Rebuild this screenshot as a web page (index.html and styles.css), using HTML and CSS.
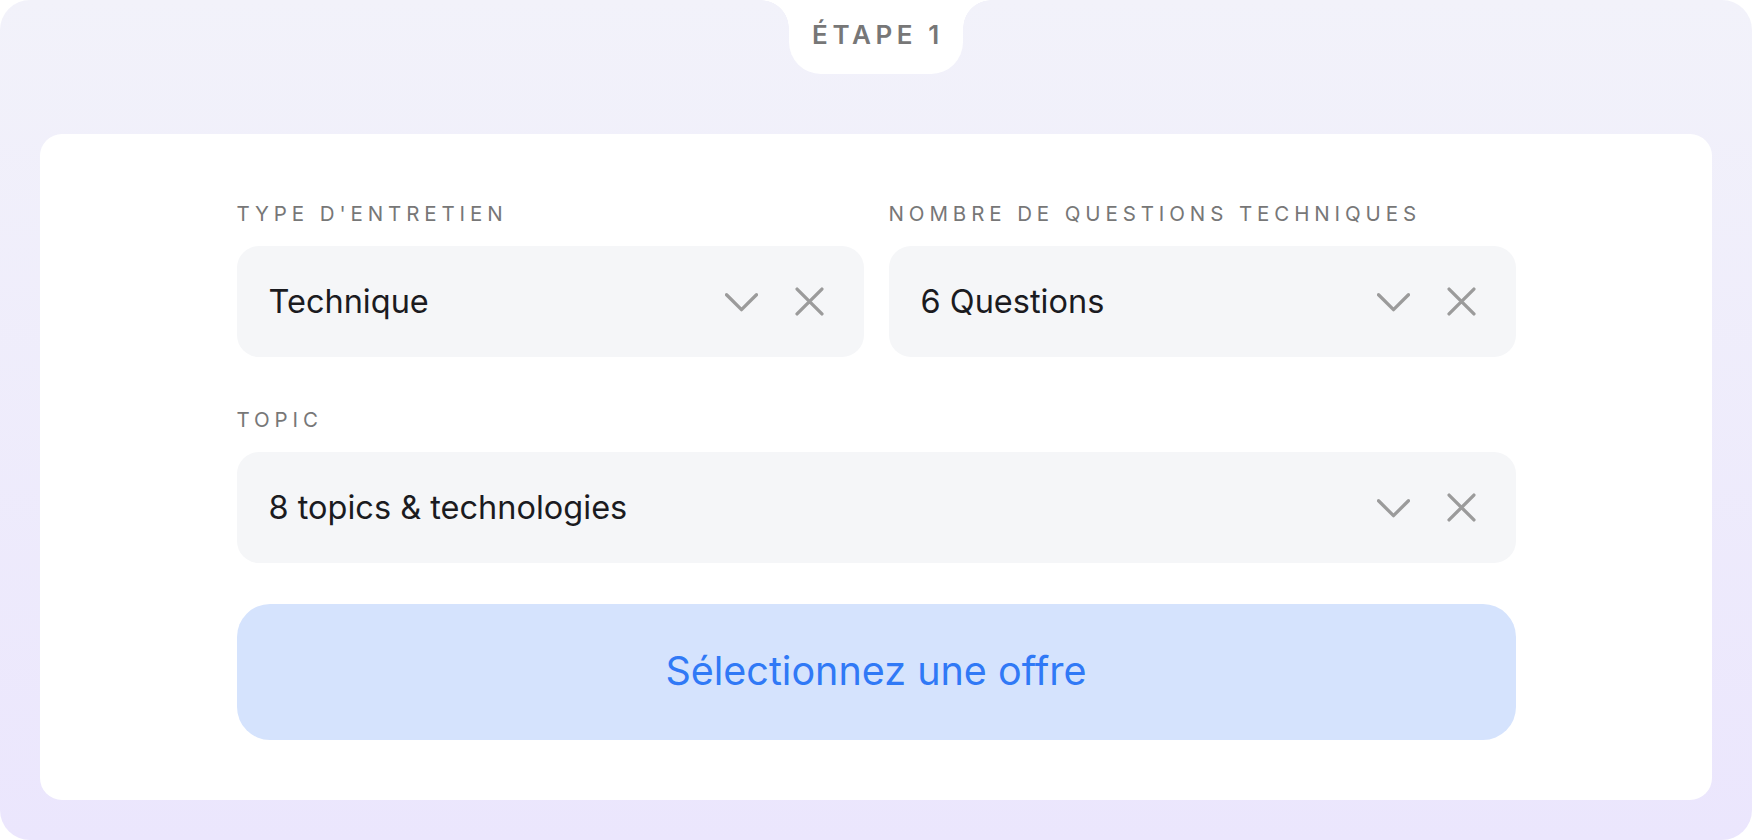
FILE: index.html
```html
<!DOCTYPE html>
<html lang="fr">

<head>
  <meta charset="UTF-8">
  <meta name="viewport" content="width=device-width, initial-scale=1.0">
  <title>Étape 1</title>
  <link rel="stylesheet" href="styles.css">
</head>

<body>

  <section class="step">
    <div class="step-tab">Étape 1</div>

    <div class="card">
      <form class="form">
        <div class="row">
          <div class="group">
            <label class="label">Type d'entretien</label>
            <div class="select">
              <span class="select-value">Technique</span>
              <svg class="icon-chevron" viewBox="0 0 32 19"><path d="M1.5 1.5 L16 16 L30.5 1.5" /></svg>
              <svg class="icon-clear" viewBox="0 0 28 28"><path d="M2 2 L26 26 M26 2 L2 26" /></svg>
            </div>
          </div>

          <div class="group">
            <label class="label">Nombre de questions techniques</label>
            <div class="select">
              <span class="select-value">6 Questions</span>
              <svg class="icon-chevron" viewBox="0 0 32 19"><path d="M1.5 1.5 L16 16 L30.5 1.5" /></svg>
              <svg class="icon-clear" viewBox="0 0 28 28"><path d="M2 2 L26 26 M26 2 L2 26" /></svg>
            </div>
          </div>
        </div>

        <div class="group">
          <label class="label">Topic</label>
          <div class="select">
            <span class="select-value">8 topics &amp; technologies</span>
            <svg class="icon-chevron" viewBox="0 0 32 19"><path d="M1.5 1.5 L16 16 L30.5 1.5" /></svg>
            <svg class="icon-clear" viewBox="0 0 28 28"><path d="M2 2 L26 26 M26 2 L2 26" /></svg>
          </div>
        </div>

        <button type="button" class="offer-btn">Sélectionnez une offre</button>
      </form>
    </div>
  </section>

</body>

</html>
```

FILE: styles.css
```css
* {
  box-sizing: border-box;
  font-family: 'Inter', 'Noto Sans', sans-serif;
}

body {
  background-color: #fff;
  margin: 0;
}

.step {
  display: flex;
  flex-direction: column;
  align-items: center;
  height: 840px;
  padding: 0 40px 40px;
  border-radius: 30px;
  background: linear-gradient(180deg, #f2f2fa 0%, #ebe6fd 100%);
}

/* notch at the top of the panel */
.step-tab {
  position: relative;
  width: 174px;
  height: 74px;
  margin-bottom: 60px;
  padding-top: 20px;
  background-color: #fff;
  border-radius: 0 0 32px 32px;
  color: #777;
  font-size: 26px;
  font-weight: 600;
  letter-spacing: 4.6px;
  line-height: 30px;
  text-align: center;
  text-transform: uppercase;
  text-indent: 4px;
}

.step-tab::before,
.step-tab::after {
  content: "";
  position: absolute;
  top: 0;
  width: 28px;
  height: 28px;
}

.step-tab::before {
  left: -28px;
  background: radial-gradient(circle at 0 100%, transparent 27.5px, #fff 28px);
}

.step-tab::after {
  right: -28px;
  background: radial-gradient(circle at 100% 100%, transparent 27.5px, #fff 28px);
}

.card {
  align-self: stretch;
  display: flex;
  justify-content: center;
  height: 666px;
  padding-top: 68px;
  background-color: #fff;
  border-radius: 22px;
}

.form {
  display: flex;
  flex-direction: column;
  width: 1279px;
  gap: 51px;
}

.row {
  display: flex;
  gap: 25px;
}

.row .group {
  flex: 1;
}

.group {
  display: flex;
  flex-direction: column;
  gap: 20px;
}

.label {
  color: #777;
  font-size: 20.5px;
  line-height: 24px;
  letter-spacing: 4.9px;
  text-transform: uppercase;
}

.select {
  display: flex;
  align-items: center;
  height: 111px;
  padding: 0 40px 0 32px;
  background-color: #f5f6f8;
  border-radius: 22px;
}

.select-value {
  flex: 1;
  color: #1b1b1f;
  font-size: 32.5px;
}

.icon-chevron,
.icon-clear {
  fill: none;
  stroke: #9b9b9b;
  stroke-width: 3.2;
  stroke-linecap: round;
  stroke-linejoin: round;
}

.icon-chevron {
  width: 33px;
  height: 20px;
  margin-top: 2px;
  margin-right: 37px;
}

.icon-clear {
  width: 29px;
  height: 29px;
}

.offer-btn {
  height: 136px;
  margin-top: -10px;
  padding-bottom: 4px;
  border: none;
  border-radius: 33px;
  background-color: #d5e3fd;
  color: #3079f6;
  font-size: 39.5px;
  cursor: pointer;
}
```
